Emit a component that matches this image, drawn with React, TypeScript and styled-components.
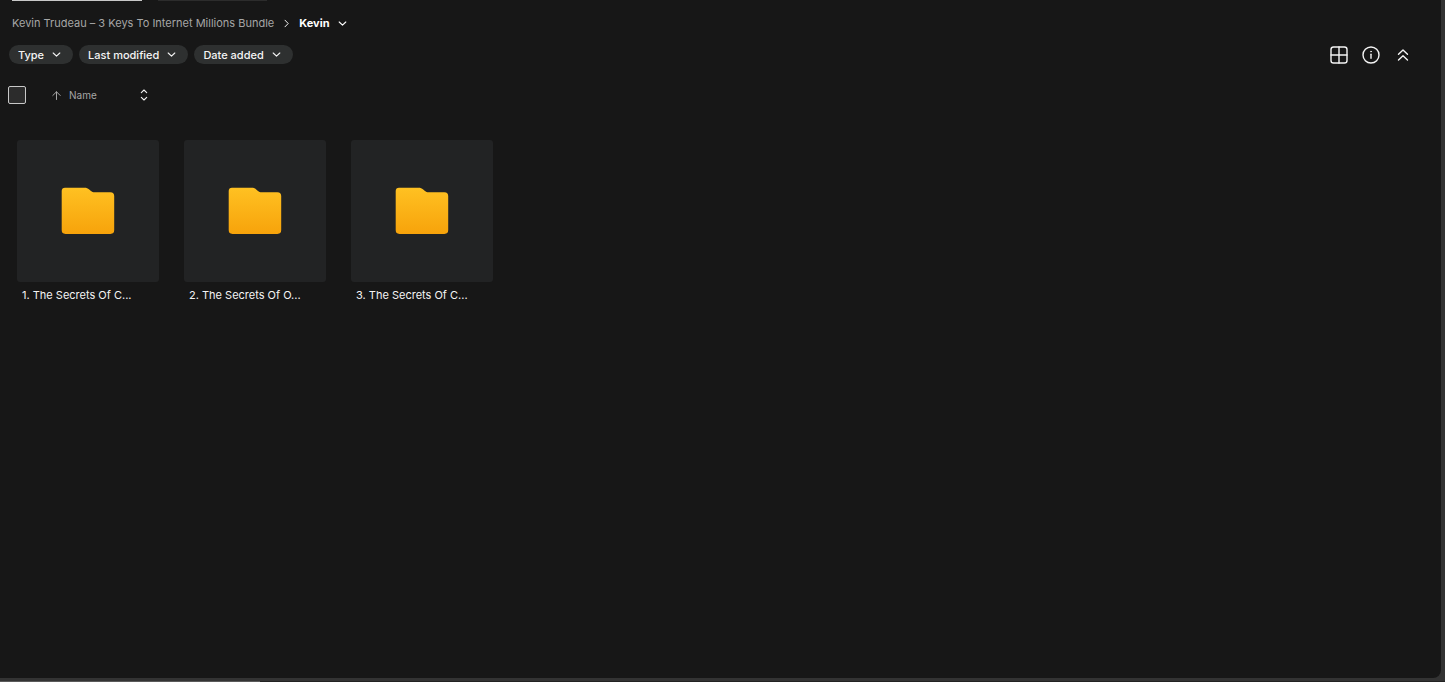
import React from "react";
import styled, { createGlobalStyle } from "styled-components";

const GlobalStyle = createGlobalStyle`
  *, *::before, *::after { box-sizing: border-box; }
  body {
    margin: 0;
    background: #333333;
    font-family: Inter, "Liberation Sans", sans-serif;
    font-size: 11px;
    color: #f4f4f4;
  }
  button, input { font: inherit; color: inherit; }
`;

const Page = styled.div`
  min-height: 100vh;
  display: flex;
  flex-direction: column;
`;

const Panel = styled.main`
  flex: 1;
  margin: 0 4px 3px 0;
  background: #171717;
  border-bottom-right-radius: 8px;
`;

const ActionEdges = styled.div`
  display: flex;
  gap: 16px;
  height: 1px;
  padding-left: 12px;
`;

const ActionEdge = styled.span<{ $width: number; $tone: string }>`
  width: ${(p) => p.$width}px;
  background: ${(p) => p.$tone};
`;

const Breadcrumb = styled.nav`
  display: flex;
  align-items: center;
  gap: 8px;
  height: 44px;
  padding-left: 12px;
`;

const CrumbLink = styled.a`
  color: #a6a6a6;
  line-height: 14px;
  text-decoration: none;
`;

const CurrentCrumb = styled.button`
  display: flex;
  align-items: center;
  gap: 8px;
  padding: 0;
  border: 0;
  background: none;
  color: #ffffff;
  font-weight: 700;
  line-height: 14px;
`;

const Toolbar = styled.div`
  display: flex;
  align-items: flex-start;
  justify-content: space-between;
  padding: 0 28px 0 9px;
  height: 20px;
`;

const Filters = styled.div`
  display: flex;
  gap: 6px;
`;

const FilterPill = styled.button`
  display: flex;
  align-items: center;
  gap: 8px;
  height: 19px;
  padding: 0 12px 0 9px;
  border: 0;
  border-radius: 10px;
  background: #2e3030;
  color: #f4f4f4;
  font-weight: 500;
`;

const ViewTools = styled.div`
  display: flex;
  gap: 12px;
`;

const IconButton = styled.button`
  display: flex;
  align-items: center;
  justify-content: center;
  width: 20px;
  height: 20px;
  padding: 0;
  border: 0;
  background: none;
  color: #f4f4f4;
`;

const ListHeader = styled.div`
  display: flex;
  align-items: center;
  height: 20px;
  margin-top: 20px;
  padding-left: 8px;
`;

const SelectAll = styled.input`
  appearance: none;
  width: 18px;
  height: 18px;
  margin: 0 26px 0 0;
  border: 1px solid #c8c8c8;
  border-radius: 2px;
  background: #2c2c2c;
`;

const SortButton = styled.button`
  display: flex;
  align-items: center;
  gap: 8px;
  width: 82px;
  padding: 0;
  border: 0;
  background: none;
  color: #a6a6a6;
  font-size: 10px;
`;

const Grid = styled.ul`
  display: flex;
  flex-wrap: wrap;
  gap: 25px;
  margin: 0;
  padding: 35px 17px 17px;
  list-style: none;
`;

const FolderLink = styled.a`
  display: block;
  width: 142px;
  color: #f4f4f4;
  text-decoration: none;
`;

const Thumb = styled.div`
  display: flex;
  align-items: center;
  justify-content: center;
  height: 142px;
  border-radius: 3px;
  background: #222324;
`;

const FolderName = styled.span`
  display: block;
  padding: 5px 4px 0 5px;
  line-height: 16px;
  white-space: nowrap;
`;

const ScrollTrack = styled.div`
  height: 1px;
  background: #222222;
`;

const ScrollThumb = styled.div`
  width: 18%;
  height: 1px;
  background: #5a5a5a;
`;

const Stroke = styled.svg`
  display: block;
  flex: none;
  fill: none;
  stroke: currentColor;
  stroke-linecap: round;
  stroke-linejoin: round;
`;

const ChevronDown = () => (
  <Stroke width="9" height="9" viewBox="0 0 9 9" strokeWidth="1.1" aria-hidden="true">
    <path d="M1.2 3 4.5 6.2 7.8 3" />
  </Stroke>
);

const ChevronRight = () => (
  <Stroke width="9" height="9" viewBox="0 0 9 9" strokeWidth="1" aria-hidden="true">
    <path d="M3 1.2 6.2 4.5 3 7.8" />
  </Stroke>
);

const ArrowUp = () => (
  <Stroke width="9" height="9" viewBox="0 0 9 9" strokeWidth="1" aria-hidden="true">
    <path d="M4.5 8.5V.8M.8 4.5 4.5.8 8.2 4.5" />
  </Stroke>
);

const SortArrows = () => (
  <Stroke width="8" height="12" viewBox="0 0 8 12" strokeWidth="1.1" aria-hidden="true">
    <path d="M1.3 3.6 4 1 6.7 3.6M1.3 8.4 4 11 6.7 8.4" />
  </Stroke>
);

const GridIcon = () => (
  <Stroke width="20" height="20" viewBox="0 0 20 20" strokeWidth="1.4" aria-hidden="true">
    <rect x="2" y="2" width="16" height="16" rx="2.6" />
    <path d="M10 2v16M2 10h16" />
  </Stroke>
);

const InfoIcon = () => (
  <Stroke width="20" height="20" viewBox="0 0 20 20" strokeWidth="1.4" aria-hidden="true">
    <circle cx="10" cy="10" r="8" />
    <path d="M10 9.3v4" />
    <circle cx="10" cy="6.6" r=".5" fill="currentColor" strokeWidth=".6" />
  </Stroke>
);

const CollapseIcon = () => (
  <Stroke width="20" height="20" viewBox="0 0 20 20" strokeWidth="1.4" aria-hidden="true">
    <path d="M5.5 9.3 10 5 14.5 9.3M5.5 15 10 10.7 14.5 15" />
  </Stroke>
);

const FolderIcon = ({ id }: { id: string }) => (
  <svg width="54" height="48" viewBox="0 0 54 48" aria-hidden="true">
    <defs>
      <linearGradient id={id} x1="0" y1="0" x2="0" y2="1">
        <stop offset="0" stopColor="#ffc122" />
        <stop offset="1" stopColor="#f7a30b" />
      </linearGradient>
    </defs>
    <path
      fill={`url(#${id})`}
      d="M.7 4C.7 1.9 1.9.7 4 .7H23.5C25.5.7 26.8 1.2 28.2 2.5L30 4C31 4.9 32 5.3 33.5 5.3H49.3C52 5.3 53.2 6.7 53.2 9.1V43.1C53.2 45.7 52 46.9 49.4 46.9H4.5C1.9 46.9.7 45.7.7 43.1Z"
    />
  </svg>
);

const filters = ["Type", "Last modified", "Date added"];
const folders = ["1. The Secrets Of C...", "2. The Secrets Of O...", "3. The Secrets Of C..."];

export default function App() {
  return (
    <Page>
      <GlobalStyle />
      <Panel>
        <ActionEdges>
          <ActionEdge $width={130} $tone="#c8c8c8" />
          <ActionEdge $width={109} $tone="#2c2c2c" />
        </ActionEdges>
        <Breadcrumb aria-label="Folder path">
          <CrumbLink href="#bundle">Kevin Trudeau – 3 Keys To Internet Millions Bundle</CrumbLink>
          <ChevronRight />
          <CurrentCrumb type="button">
            Kevin
            <ChevronDown />
          </CurrentCrumb>
        </Breadcrumb>
        <Toolbar>
          <Filters>
            {filters.map((label) => (
              <FilterPill type="button" key={label}>
                {label}
                <ChevronDown />
              </FilterPill>
            ))}
          </Filters>
          <ViewTools>
            <IconButton type="button" aria-label="Grid view"><GridIcon /></IconButton>
            <IconButton type="button" aria-label="Details"><InfoIcon /></IconButton>
            <IconButton type="button" aria-label="Collapse header"><CollapseIcon /></IconButton>
          </ViewTools>
        </Toolbar>
        <ListHeader>
          <SelectAll type="checkbox" aria-label="Select all" />
          <SortButton type="button">
            <ArrowUp />
            Name
          </SortButton>
          <IconButton type="button" aria-label="Change sort order"><SortArrows /></IconButton>
        </ListHeader>
        <Grid>
          {folders.map((name, i) => (
            <li key={name}>
              <FolderLink href={`#folder-${i + 1}`}>
                <Thumb><FolderIcon id={`folder-fill-${i}`} /></Thumb>
                <FolderName>{name}</FolderName>
              </FolderLink>
            </li>
          ))}
        </Grid>
      </Panel>
      <ScrollTrack><ScrollThumb /></ScrollTrack>
    </Page>
  );
}
